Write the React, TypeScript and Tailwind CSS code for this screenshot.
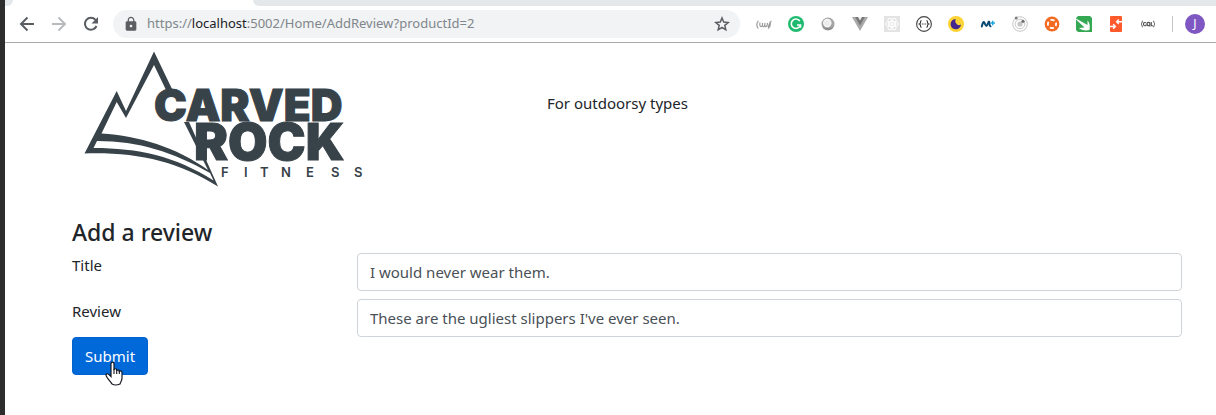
import type { ReactNode } from "react";
import { MdLock } from "react-icons/md";

function Glyph({ children }: { children: ReactNode }) {
  return (
    <svg viewBox="0 0 16 16" className="size-4" aria-hidden="true">
      {children}
    </svg>
  );
}

function ToolIcon({ children }: { children: ReactNode }) {
  return (
    <svg viewBox="0 0 20 20" className="size-5" fill="none" stroke="currentColor" strokeWidth="2" aria-hidden="true">
      {children}
    </svg>
  );
}

const extensions: { name: string; icon: ReactNode }[] = [
  {
    name: "JSON viewer",
    icon: (
      <g fill="none" stroke="#9a9a9a" strokeWidth="1.200">
        <path d="M2.500 5C.5 6 .2 10 2.200 12.500M4 6.500C3.500 9 4 11 5.500 10.500S6.500 8 6.500 7M6.500 10c1 1.500 2 .5 2-1M9 7c-.5 3 0 4 1.200 3.500S11.500 8 11.500 7M12 11c1.200-1 1.300-5 3.500-6M14 5.500c.5 2 .3 5.500-2 7" />
      </g>
    ),
  },
  {
    name: "Grammar checker",
    icon: (
      <>
        <circle cx="8" cy="8" r="8" fill="#1fba6f" />
        <path d="M11.800 5A4.700 4.700 0 1 0 12.500 9H9M12.500 8.500v3.300" fill="none" stroke="#fff" strokeWidth="1.600" />
      </>
    ),
  },
  {
    name: "Web recorder",
    icon: (
      <>
        <circle cx="8" cy="8" r="6.500" fill="#a4a4a4" />
        <path d="M2 10a6.500 6.500 0 0 0 12 0C11 13 5 13 2 10Z" fill="#8c8c8c" />
        <circle cx="7.300" cy="7" r="4.200" fill="#fff" />
        <circle cx="7.300" cy="7" r="3.300" fill="#ececec" />
      </>
    ),
  },
  {
    name: "Vue devtools",
    icon: (
      <>
        <path d="M0 1h16L8 15Z" fill="#a9a9a9" />
        <path d="M3.200 1h9.600L8 9.500Z" fill="#777" />
        <path d="M6 1h4L8 4.500Z" fill="#eee" />
      </>
    ),
  },
  {
    name: "React devtools",
    icon: (
      <>
        <path d="M0 0h16v16H0Z" fill="#e3e3e3" />
        <g fill="none" stroke="#fff" strokeWidth="1">
          <ellipse cx="8" cy="8" rx="6.500" ry="2.500" />
          <ellipse cx="8" cy="8" rx="6.500" ry="2.500" transform="rotate(60 8 8)" />
          <ellipse cx="8" cy="8" rx="6.500" ry="2.500" transform="rotate(120 8 8)" />
        </g>
        <circle cx="8" cy="8" r="1.300" fill="#fff" />
      </>
    ),
  },
  {
    name: "API inspector",
    icon: (
      <>
        <circle cx="8" cy="8" r="7.400" fill="#fff" stroke="#444" strokeWidth="1.100" />
        <path d="M5.500 4.500c-1.600 0-.3 3-2 3.500 1.700.5.4 3.500 2 3.500M10.500 4.500c1.600 0 .3 3 2 3.500-1.700.5-.4 3.500-2 3.500" fill="none" stroke="#333" strokeWidth="1.200" />
        <path d="M5.800 8h1m.7 0h1m.7 0h1" stroke="#333" strokeWidth="1.100" />
      </>
    ),
  },
  {
    name: "Night mode",
    icon: (
      <>
        <circle cx="8" cy="8" r="8" fill="#fbd335" />
        <path d="M5.500 3.500A5.200 5.200 0 1 0 13 8.500 3.500 3.500 0 0 1 8.200 7.500 3.300 3.300 0 0 1 8 3.300 5.200 5.200 0 0 0 5.500 3.500Z" fill="#43278e" />
      </>
    ),
  },
  {
    name: "Mobile plus",
    icon: (
      <>
        <path d="M1.800 10.500C2.500 7.500 3.500 5 4.300 6.500S5.500 10 6.500 10s1.500-4.500 2.500-4.500S8.800 10 10.500 10.300" fill="none" stroke="#0b4a72" strokeWidth="2" strokeLinecap="round" />
        <path d="M12.700 4.800v4.400M10.500 7h4.400" stroke="#18a6dc" strokeWidth="1.400" />
      </>
    ),
  },
  {
    name: "Orbit",
    icon: (
      <>
        <circle cx="8" cy="8" r="7.300" fill="none" stroke="#c7c7c7" />
        <circle cx="8" cy="8" r="4.800" fill="none" stroke="#c9c9c9" />
        <circle cx="8" cy="8" r="2.600" fill="#c5c5c5" />
        <circle cx="4.200" cy="2" r="1.500" fill="#7d7d7d" />
        <circle cx="11" cy="5.300" r="1.600" fill="#6e6e6e" />
      </>
    ),
  },
  {
    name: "Support ring",
    icon: (
      <>
        <circle cx="8" cy="8" r="7.400" fill="#f26b21" />
        <circle cx="8" cy="8" r="4.100" fill="none" stroke="#fff" strokeWidth="1.800" strokeDasharray="4.200 2.240" strokeDashoffset="2.100" />
      </>
    ),
  },
  {
    name: "Feather",
    icon: (
      <>
        <path d="M2 0h12l2 2v14H2l-2-2V2Z" fill="#34a853" />
        <path d="M0 2.500 11.500 9V4.500C14 7 14 10 13.500 14 9 15 5 14 3 12l5.500-.5L0 3.500Z" fill="#fff" />
      </>
    ),
  },
  {
    name: "Page tools",
    icon: (
      <>
        <rect x="2" y="0" width="12" height="16" rx="1" fill="#ff5a2b" />
        <path d="M14 5.800H9.500M10.800 3.600 8.600 5.800 10.800 8M2 10.500h4.500M5.200 8.300 7.400 10.500l-2.200 2.200" fill="none" stroke="#fff" strokeWidth="1.400" />
      </>
    ),
  },
  {
    name: "GraphQL",
    icon: (
      <g fill="none" stroke="#555" strokeWidth="1">
        <path d="M3 5C1.300 5 2.500 7.500 1 8c1.500.5.3 3 2 3M13 5c1.700 0 .5 2.500 2 3-1.500.5-.3 3-2 3" />
        <path d="M6 6.800C4 6 3.300 7 3.500 8.500S5.500 10 6 9.300V8.500" strokeWidth="1.200" />
        <ellipse cx="8.500" cy="8" rx="1.500" ry="1.700" strokeWidth="1.300" />
        <path d="m9 9 1.200 1.500M11.300 6v3.700H13" strokeWidth="1.100" />
      </g>
    ),
  },
];

function BrowserBar() {
  return (
    <header className="border-b border-[#a9a9a9] bg-white">
      <div className="flex h-1.5">
        <div className="w-2 rounded-br-lg bg-[#e4e8eb]" />
        <div className="w-60" />
        <div className="grow rounded-bl-lg bg-[#e4e8eb]" />
      </div>
      <div className="flex h-9 items-center pr-[11px] pl-3">
        <nav className="flex gap-3 text-[#5a5e63]" aria-label="History">
          <button type="button" aria-label="Back">
            <ToolIcon><path d="M17 10H4.500M10.500 3.500 4 10l6.500 6.500" /></ToolIcon>
          </button>
          <button type="button" aria-label="Forward" className="text-[#b9bbbd]">
            <ToolIcon><path d="M3 10h12.500M9.500 3.500 16 10l-6.500 6.500" /></ToolIcon>
          </button>
          <button type="button" aria-label="Reload">
            <ToolIcon>
              <path d="M15.500 12A6 6 0 1 1 14.500 5.800L15.500 7" />
              <path d="M17 3v6.500h-6.500Z" fill="currentColor" stroke="none" />
            </ToolIcon>
          </button>
        </nav>
        <div className="ml-3 flex h-7 grow items-center rounded-full bg-[#f1f3f4] pr-2.5 pl-2.5">
          <MdLock className="size-4 shrink-0 text-[#5a5e63]" />
          <div className="ml-2 grow text-[13px] text-[#80868b]">
            https://<span className="text-[#202124]">localhost</span>:5002/Home/AddReview?productId=2
          </div>
          <button type="button" aria-label="Bookmark this page" className="text-[#5a5e63]">
            <Glyph>
              <path d="m8 2 1.700 4.100 4.500.4-3.400 2.900 1 4.400L8 11.500l-3.800 2.300 1-4.400L1.800 6.500l4.500-.4Z" fill="none" stroke="currentColor" strokeWidth="1.500" />
            </Glyph>
          </button>
        </div>
        <div className="ml-4 flex gap-4">
          {extensions.map(({ name, icon }) => (
            <button key={name} type="button" aria-label={name}>
              <Glyph>{icon}</Glyph>
            </button>
          ))}
        </div>
        <div className="mr-3 ml-4 h-4 w-px bg-[#c4c6c8]" />
        <button type="button" aria-label="Profile" className="size-5 rounded-full bg-[#7e57c2] text-xs text-white">
          J
        </button>
      </div>
    </header>
  );
}

function Logo() {
  return (
    <svg viewBox="84 49 284 138" className="h-[138px] w-[284px]" role="img" aria-label="Carved Rock Fitness">
      <path
        d="M84.500 153.500 116.700 91 126 111 154 51.500 172.500 90H166L154 65 126 118 116.700 102 101.500 133.500C139 136 176 147 208 170L184 122H189L218 186.500C177 161 137 152 84.500 153.500ZM97 141 93.500 148C138 148 175 156 213.500 180.500L210 173C173 152 139 141 97 141Z"
        fill="#374249"
        fillRule="evenodd"
      />
      <g fill="#374249" stroke="#374249" strokeWidth="1" className="font-[Inter]" fontWeight="900">
        <text x="154" y="121" fontSize="44">CARVED</text>
        <text x="194" y="160" fontSize="51">ROCK</text>
      </g>
      <text x="221 244 260 281 306 331 354" y="177" fontSize="13" fill="#374249" className="font-[Inter]" fontWeight="600">
        FITNESS
      </text>
    </svg>
  );
}

function Field({ id, label, value }: { id: string; label: string; value: string }) {
  return (
    <div className="grid grid-cols-12">
      <label htmlFor={id} className="col-span-3 self-start px-[15px] leading-6">{label}</label>
      <div className="col-span-9 px-[15px]">
        <input
          id={id}
          name={id}
          defaultValue={value}
          className="h-[38px] w-full rounded border border-[#ced4da] bg-white px-3 text-[#495057] outline-none"
        />
      </div>
    </div>
  );
}

function HandCursor() {
  return (
    <svg viewBox="0 0 20 26" className="pointer-events-none absolute top-6 left-8 h-[26px] w-5" aria-hidden="true">
      <path
        d="M7 3C7 .500 10 .500 10 3V9C10 7.300 12.700 7.300 12.700 9.300V10C12.700 8.500 15.300 8.500 15.300 10.300V11C15.300 9.500 18 9.500 18 11.500V17C18 20 16.500 21 16 23Q11.500 25 8 23C7 21 4.500 19 2.500 15.500 1 13 3.500 12 5 13.500L7 15.500Z"
        fill="#fff"
        stroke="#15151f"
        strokeWidth="1.200"
      />
      <path d="M10 8v5M12.700 9v4M15.300 10v3" stroke="#15151f" strokeWidth="1.100" />
    </svg>
  );
}

export default function App() {
  return (
    <div className="min-h-screen border-l-[5px] border-[#2d2d2d] bg-white font-['Noto_Sans',sans-serif] text-[15px] text-[#212529]">
      <BrowserBar />
      <main className="pt-1.5 pr-[19px] pl-[52px]">
        <div className="grid grid-cols-12">
          <div className="col-span-5 pl-[27px]"><Logo /></div>
          <p className="col-span-7 px-[15px] pt-[42px] leading-6">For outdoorsy types</p>
        </div>
        <h3 className="mt-[31px] mb-[7px] px-[15px] text-[23px] leading-7 font-medium">Add a review</h3>
        <form onSubmit={(event) => event.preventDefault()}>
          <div className="flex flex-col gap-2">
            <Field id="title" label="Title" value="I would never wear them." />
            <Field id="review" label="Review" value="These are the ugliest slippers I've ever seen." />
          </div>
          <div className="px-[15px]">
            <div className="relative w-fit">
              <button type="submit" className="h-[38px] rounded border border-[#0062cc] bg-[#0069d9] px-3 text-white">
                Submit
              </button>
              <HandCursor />
            </div>
          </div>
        </form>
      </main>
    </div>
  );
}
